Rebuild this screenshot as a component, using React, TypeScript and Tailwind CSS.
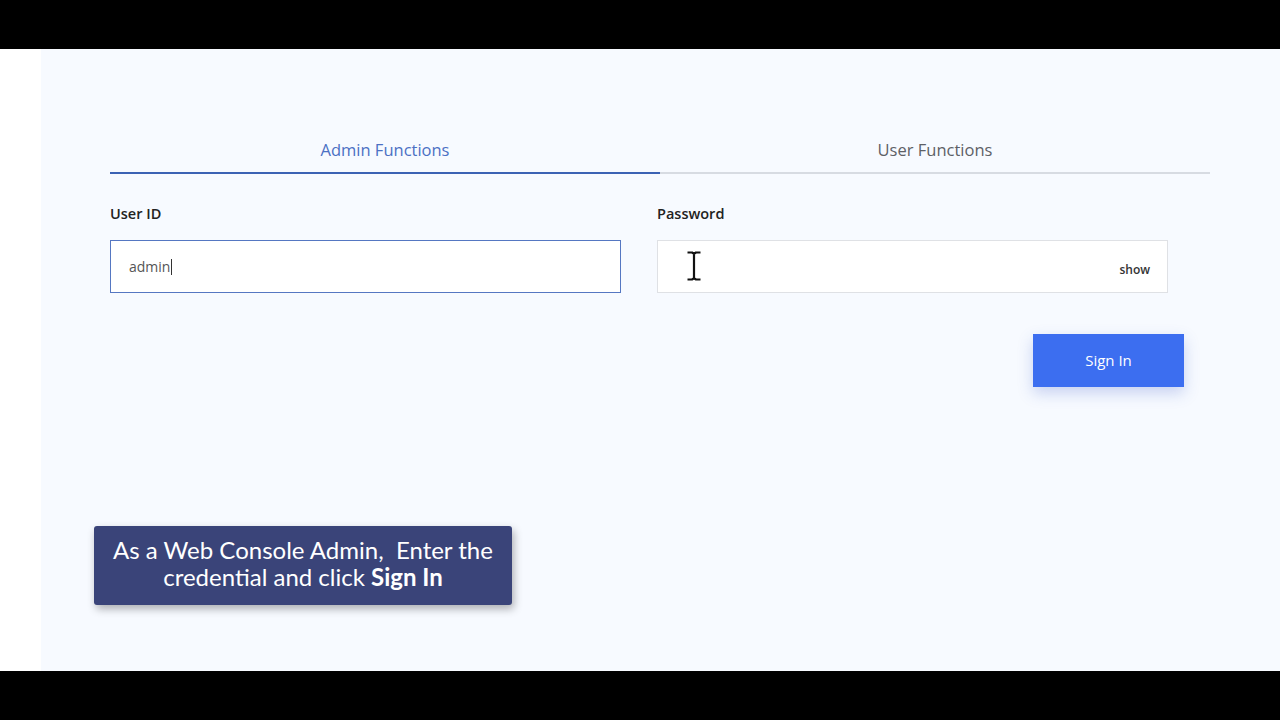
import React from 'react';

const App = () => {
  return (
    <div className="h-[720px] w-[1280px] flex flex-col bg-black" style={{ fontFamily: '"Open Sans", "Noto Sans", sans-serif' }}>
      {/* top letterbox */}
      <div className="h-[49px] bg-black" />

      <div className="h-[622px] flex">
        <div className="w-[41px] bg-white" />
        <div className="relative flex-1 bg-[#f7faff] pl-[69px] pr-[70px] pt-[89px]">
          {/* Tabs */}
          <div className="flex w-[1100px]">
            <div className="w-1/2 border-b-2 border-[#3b62b4] pb-[10px] text-center text-[16.5px] leading-6 text-[#4b70c4]">
              Admin Functions
            </div>
            <div className="w-1/2 border-b-2 border-[#d7dbe2] pb-[10px] text-center text-[16.5px] leading-6 text-[#5d6066]">
              User Functions
            </div>
          </div>

          {/* Fields */}
          <div className="mt-[30px] flex gap-[36px]">
            <div className="w-[511px]">
              <div className="text-[14.5px] leading-5 font-semibold text-[#222]">User ID</div>
              <div className="mt-4 flex h-[53px] items-center border border-[#5577c2] bg-white pl-[18px]">
                <span className="text-[14px] text-[#555]">admin</span>
                <span className="ml-[1px] h-[16px] w-px bg-[#333]" />
              </div>
            </div>
            <div className="w-[511px]">
              <div className="text-[14.5px] leading-5 font-semibold text-[#222]">Password</div>
              <div className="mt-4 flex h-[53px] items-center justify-end border border-[#dfe1e5] bg-white pr-[17px] pt-[6px]">
                <span className="text-[12px] font-semibold text-[#333]">show</span>
              </div>
            </div>
          </div>

          {/* Sign In */}
          <div className="mt-[41px] flex w-[1074px] justify-end">
            <button className="h-[53px] w-[151px] bg-[#3c6ef0] text-[15px] text-white shadow-[0_6px_14px_rgba(60,90,200,0.25)]">
              Sign In
            </button>
          </div>

          {/* I-beam cursor */}
          <svg className="absolute left-[645px] top-[202px]" width="16" height="30" viewBox="0 0 16 30">
            <path d="M1.5 1.5h5M9.5 1.5h5M8 2v26M1.5 28.5h5M9.5 28.5h5M6 1.5l2 1.2M10 1.5l-2 1.2M6 28.5l2-1.2M10 28.5l-2-1.2" stroke="#111" strokeWidth="2.2" fill="none" />
          </svg>

          {/* annotation */}
          <div
            className="absolute left-[53px] top-[477px] w-[418px] h-[79px] rounded-[3px] bg-[#3a4479] text-center text-[24px] leading-[27px] text-white shadow-[2px_4px_8px_rgba(0,0,0,0.3)] pt-[10px]"
            style={{ fontFamily: 'Lato, "Open Sans", sans-serif' }}
          >
            As a Web Console Admin,&nbsp; Enter the
            <br />
            credential and click <span className="font-bold">Sign In</span>
          </div>
        </div>
      </div>

      {/* bottom letterbox */}
      <div className="h-[49px] bg-black" />
    </div>
  );
};

export default App;
